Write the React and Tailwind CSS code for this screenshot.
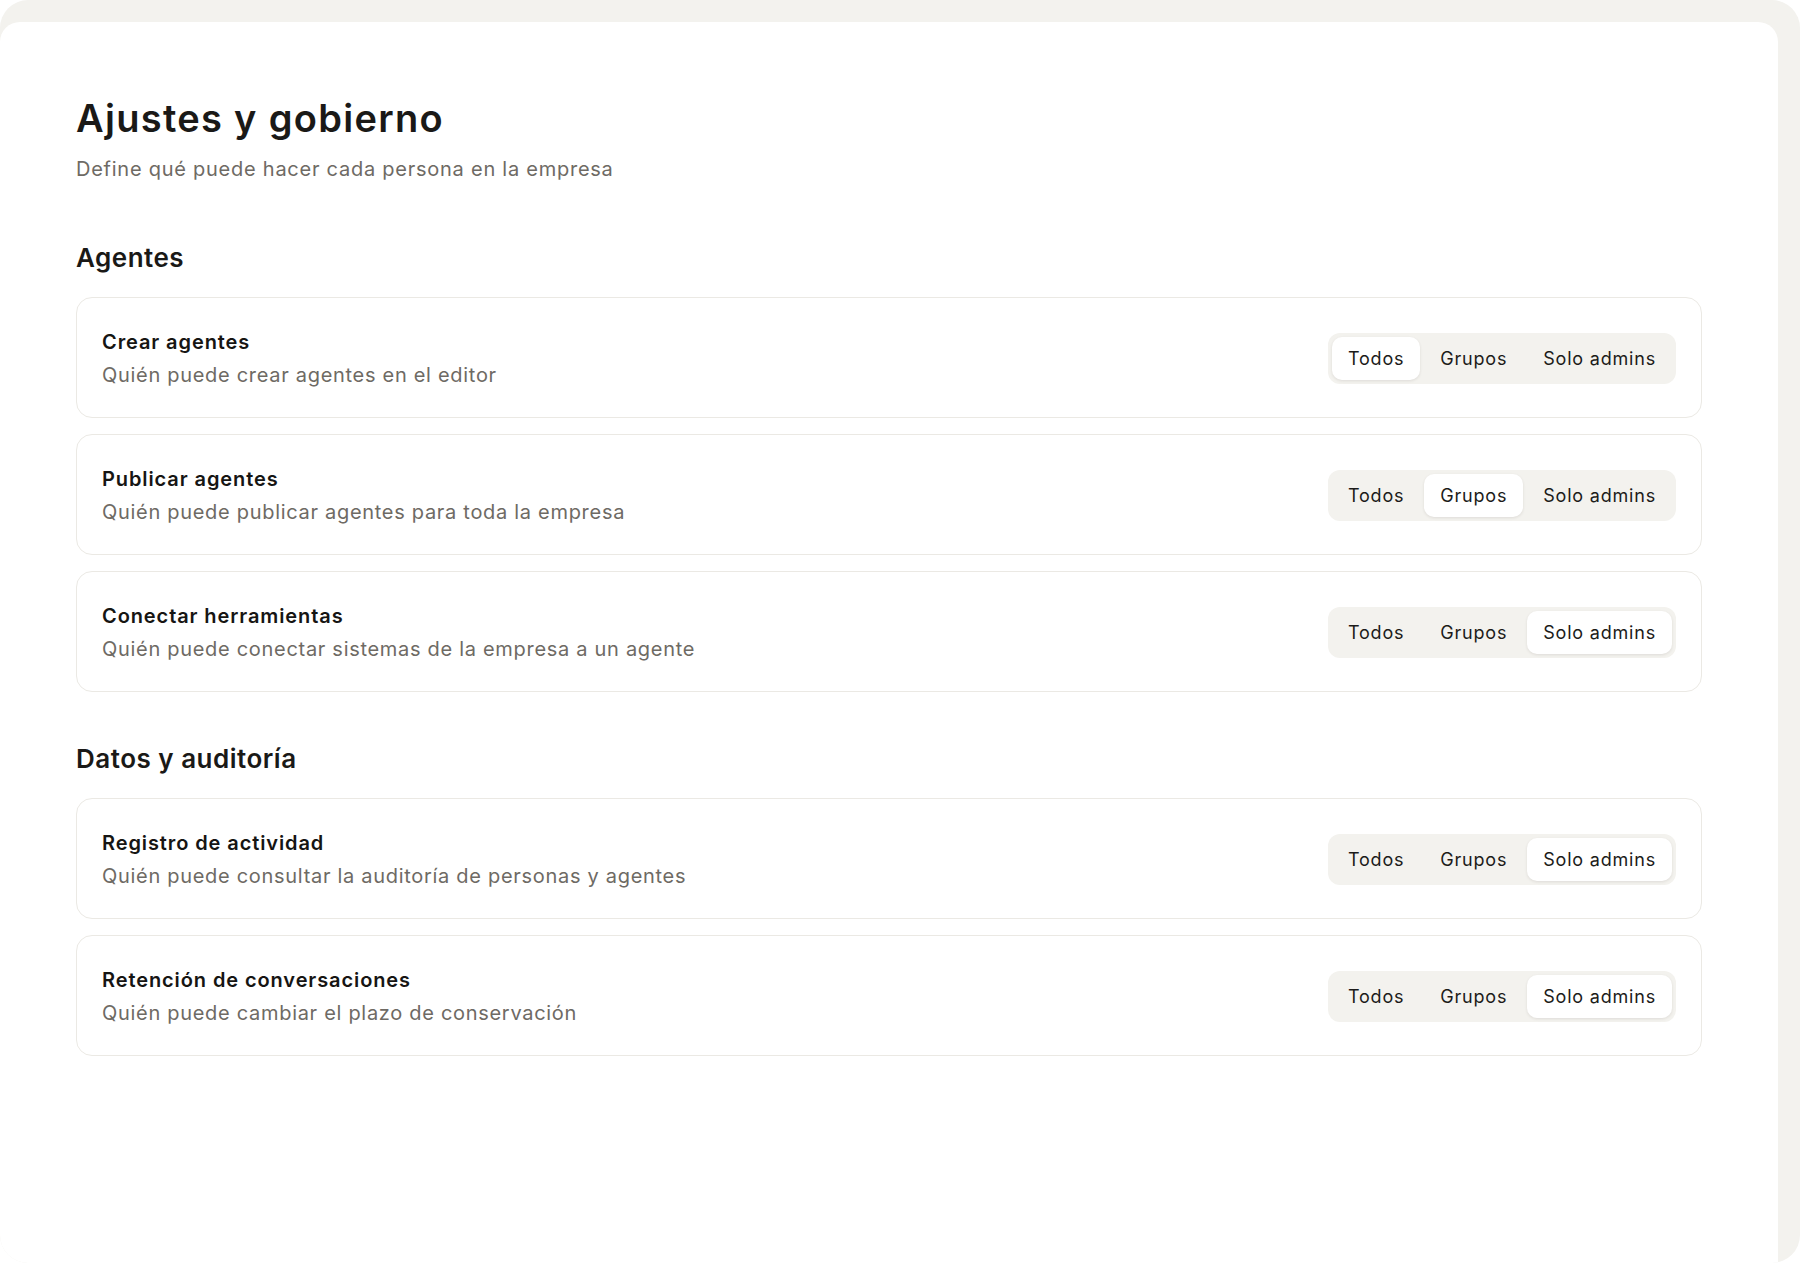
import React, { useState } from 'react';

const sections = [
  {
    title: 'Agentes',
    rows: [
      { id: 'create', label: 'Crear agentes', hint: 'Quién puede crear agentes en el editor', value: 'todos' },
      { id: 'publish', label: 'Publicar agentes', hint: 'Quién puede publicar agentes para toda la empresa', value: 'grupos' },
      { id: 'tools', label: 'Conectar herramientas', hint: 'Quién puede conectar sistemas de la empresa a un agente', value: 'admins' },
    ],
  },
  {
    title: 'Datos y auditoría',
    rows: [
      { id: 'audit', label: 'Registro de actividad', hint: 'Quién puede consultar la auditoría de personas y agentes', value: 'admins' },
      { id: 'retention', label: 'Retención de conversaciones', hint: 'Quién puede cambiar el plazo de conservación', value: 'admins' },
    ],
  },
];

const options = [
  { value: 'todos', label: 'Todos' },
  { value: 'grupos', label: 'Grupos' },
  { value: 'admins', label: 'Solo admins' },
];

const Segmented = ({ value, onChange }) => (
  <div className="flex gap-1 rounded-[12px] bg-[#f3f2ee] p-1">
    {options.map((opt) => (
      <button
        key={opt.value}
        type="button"
        onClick={() => onChange(opt.value)}
        className={
          value === opt.value
            ? 'h-[43px] rounded-[10px] bg-white px-4 text-[18px] tracking-[0.8px] text-[#1c1b19] shadow-[0_1px_3px_rgba(40,30,20,0.10)]'
            : 'h-[43px] rounded-[10px] px-4 text-[18px] tracking-[0.8px] text-[#1c1b19]'
        }
      >
        {opt.label}
      </button>
    ))}
  </div>
);

const PermissionRow = ({ row, value, onChange }) => (
  <div className="flex items-center justify-between rounded-[16px] border border-[#ebe9e4] bg-white pb-[28px] pl-[25px] pr-[25px] pt-[30px]">
    <div>
      <div className="text-[20px] font-semibold leading-[28px] tracking-[0.9px] text-[#161513]">{row.label}</div>
      <div className="mt-[5px] text-[20px] leading-[28px] tracking-[0.7px] text-[#6e6a64]">{row.hint}</div>
    </div>
    <Segmented value={value} onChange={onChange} />
  </div>
);

export default function App() {
  const [values, setValues] = useState(() => {
    const init = {};
    sections.forEach((s) => s.rows.forEach((r) => (init[r.id] = r.value)));
    return init;
  });

  return (
    <div className="h-[1263px] bg-white font-['Inter','Liberation_Sans',sans-serif]">
      <div className="flex h-full flex-col overflow-hidden rounded-[28px] bg-[#f3f2ee] pr-[22px] pt-[22px]">
        <main className="flex-1 rounded-t-[20px] bg-white px-[76px] pt-[76px]">
          <h1 className="text-[38px] font-semibold leading-[40px] tracking-[1.3px] text-[#1a1917]">Ajustes y gobierno</h1>
          <p className="mt-[17px] text-[20px] leading-[28px] tracking-[0.75px] text-[#6e6a64]">
            Define qué puede hacer cada persona en la empresa
          </p>

          {sections.map((section, i) => (
            <section key={section.title} className={i === 0 ? 'mt-[57px]' : 'mt-[49px]'}>
              <h2 className="text-[26px] font-semibold leading-[36px] tracking-[0.5px] text-[#1a1917]">{section.title}</h2>
              <div className="mt-[21px] flex flex-col gap-4">
                {section.rows.map((row) => (
                  <PermissionRow
                    key={row.id}
                    row={row}
                    value={values[row.id]}
                    onChange={(v) => setValues((prev) => ({ ...prev, [row.id]: v }))}
                  />
                ))}
              </div>
            </section>
          ))}
        </main>
      </div>
    </div>
  );
}
